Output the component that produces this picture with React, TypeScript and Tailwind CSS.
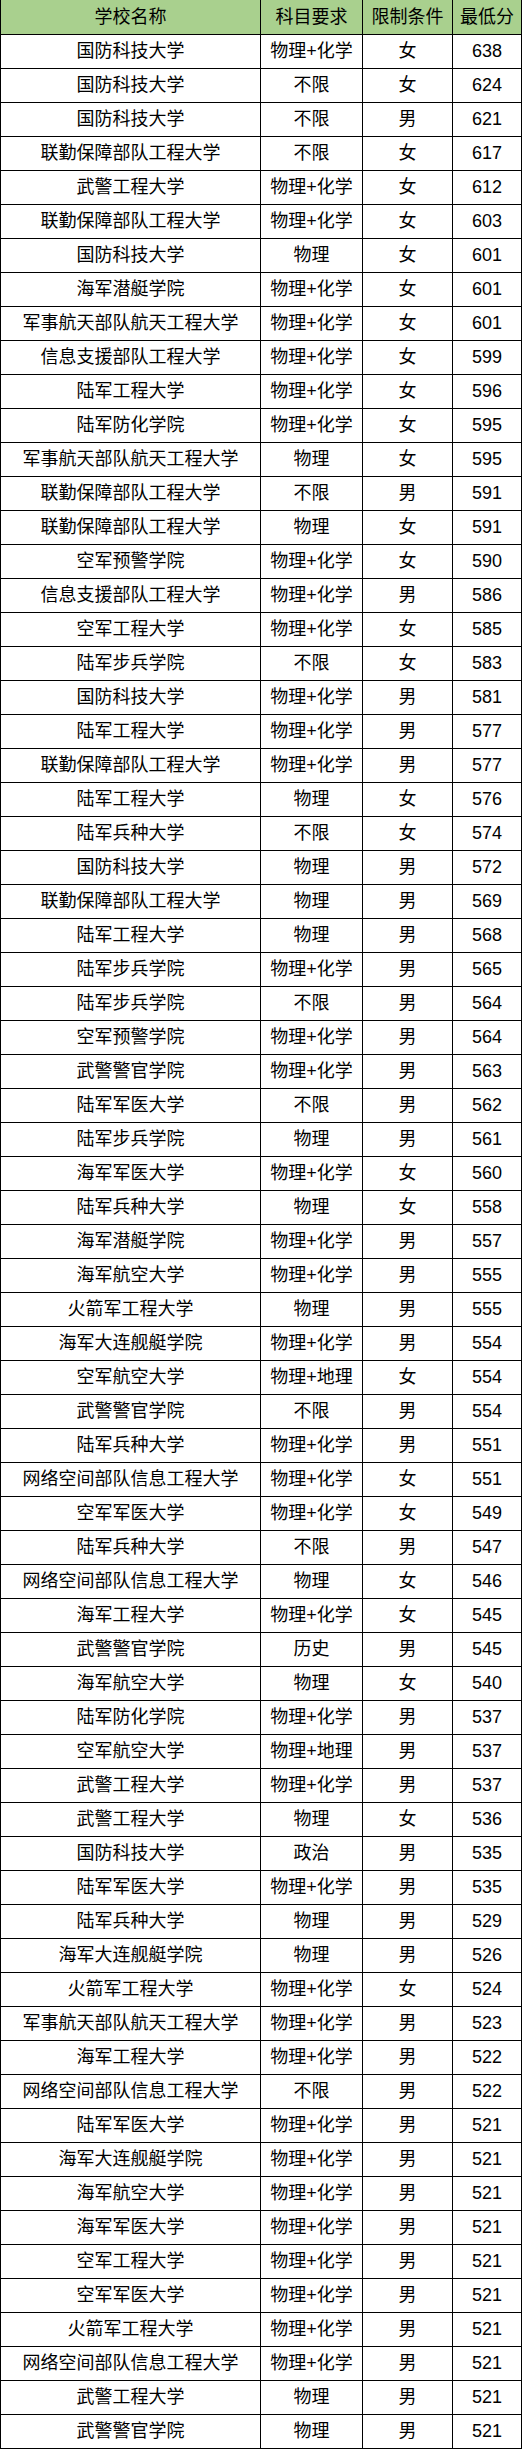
const rows: [string, string, string, number][] = [
  ["国防科技大学", "物理+化学", "女", 638],
  ["国防科技大学", "不限", "女", 624],
  ["国防科技大学", "不限", "男", 621],
  ["联勤保障部队工程大学", "不限", "女", 617],
  ["武警工程大学", "物理+化学", "女", 612],
  ["联勤保障部队工程大学", "物理+化学", "女", 603],
  ["国防科技大学", "物理", "女", 601],
  ["海军潜艇学院", "物理+化学", "女", 601],
  ["军事航天部队航天工程大学", "物理+化学", "女", 601],
  ["信息支援部队工程大学", "物理+化学", "女", 599],
  ["陆军工程大学", "物理+化学", "女", 596],
  ["陆军防化学院", "物理+化学", "女", 595],
  ["军事航天部队航天工程大学", "物理", "女", 595],
  ["联勤保障部队工程大学", "不限", "男", 591],
  ["联勤保障部队工程大学", "物理", "女", 591],
  ["空军预警学院", "物理+化学", "女", 590],
  ["信息支援部队工程大学", "物理+化学", "男", 586],
  ["空军工程大学", "物理+化学", "女", 585],
  ["陆军步兵学院", "不限", "女", 583],
  ["国防科技大学", "物理+化学", "男", 581],
  ["陆军工程大学", "物理+化学", "男", 577],
  ["联勤保障部队工程大学", "物理+化学", "男", 577],
  ["陆军工程大学", "物理", "女", 576],
  ["陆军兵种大学", "不限", "女", 574],
  ["国防科技大学", "物理", "男", 572],
  ["联勤保障部队工程大学", "物理", "男", 569],
  ["陆军工程大学", "物理", "男", 568],
  ["陆军步兵学院", "物理+化学", "男", 565],
  ["陆军步兵学院", "不限", "男", 564],
  ["空军预警学院", "物理+化学", "男", 564],
  ["武警警官学院", "物理+化学", "男", 563],
  ["陆军军医大学", "不限", "男", 562],
  ["陆军步兵学院", "物理", "男", 561],
  ["海军军医大学", "物理+化学", "女", 560],
  ["陆军兵种大学", "物理", "女", 558],
  ["海军潜艇学院", "物理+化学", "男", 557],
  ["海军航空大学", "物理+化学", "男", 555],
  ["火箭军工程大学", "物理", "男", 555],
  ["海军大连舰艇学院", "物理+化学", "男", 554],
  ["空军航空大学", "物理+地理", "女", 554],
  ["武警警官学院", "不限", "男", 554],
  ["陆军兵种大学", "物理+化学", "男", 551],
  ["网络空间部队信息工程大学", "物理+化学", "女", 551],
  ["空军军医大学", "物理+化学", "女", 549],
  ["陆军兵种大学", "不限", "男", 547],
  ["网络空间部队信息工程大学", "物理", "女", 546],
  ["海军工程大学", "物理+化学", "女", 545],
  ["武警警官学院", "历史", "男", 545],
  ["海军航空大学", "物理", "女", 540],
  ["陆军防化学院", "物理+化学", "男", 537],
  ["空军航空大学", "物理+地理", "男", 537],
  ["武警工程大学", "物理+化学", "男", 537],
  ["武警工程大学", "物理", "女", 536],
  ["国防科技大学", "政治", "男", 535],
  ["陆军军医大学", "物理+化学", "男", 535],
  ["陆军兵种大学", "物理", "男", 529],
  ["海军大连舰艇学院", "物理", "男", 526],
  ["火箭军工程大学", "物理+化学", "女", 524],
  ["军事航天部队航天工程大学", "物理+化学", "男", 523],
  ["海军工程大学", "物理+化学", "男", 522],
  ["网络空间部队信息工程大学", "不限", "男", 522],
  ["陆军军医大学", "物理+化学", "男", 521],
  ["海军大连舰艇学院", "物理+化学", "男", 521],
  ["海军航空大学", "物理+化学", "男", 521],
  ["海军军医大学", "物理+化学", "男", 521],
  ["空军工程大学", "物理+化学", "男", 521],
  ["空军军医大学", "物理+化学", "男", 521],
  ["火箭军工程大学", "物理+化学", "男", 521],
  ["网络空间部队信息工程大学", "物理+化学", "男", 521],
  ["武警工程大学", "物理", "男", 521],
  ["武警警官学院", "物理", "男", 521],
];

const cell = "h-[34px] border border-black p-0 text-center align-middle leading-none";

export default function App() {
  return (
    <div className="w-[522px] bg-white font-['Liberation_Sans','Noto_Sans_CJK_SC',sans-serif] text-[18px] text-black">
      <table className="w-[521px] table-fixed border-collapse">
        <colgroup>
          <col className="w-[260px]" />
          <col className="w-[102px]" />
          <col className="w-[90px]" />
          <col className="w-[69px]" />
        </colgroup>
        <thead>
          <tr className="bg-[#a9d08e]">
            <th className={`${cell} border-t-0 font-normal`}>学校名称</th>
            <th className={`${cell} border-t-0 font-normal`}>科目要求</th>
            <th className={`${cell} border-t-0 font-normal`}>限制条件</th>
            <th className={`${cell} border-t-0 font-normal`}>最低分</th>
          </tr>
        </thead>
        <tbody>
          {rows.map(([school, subject, limit, score], i) => (
            <tr key={i}>
              <td className={cell}>{school}</td>
              <td className={cell}>{subject}</td>
              <td className={cell}>{limit}</td>
              <td className={cell}>{score}</td>
            </tr>
          ))}
        </tbody>
      </table>
    </div>
  );
}
